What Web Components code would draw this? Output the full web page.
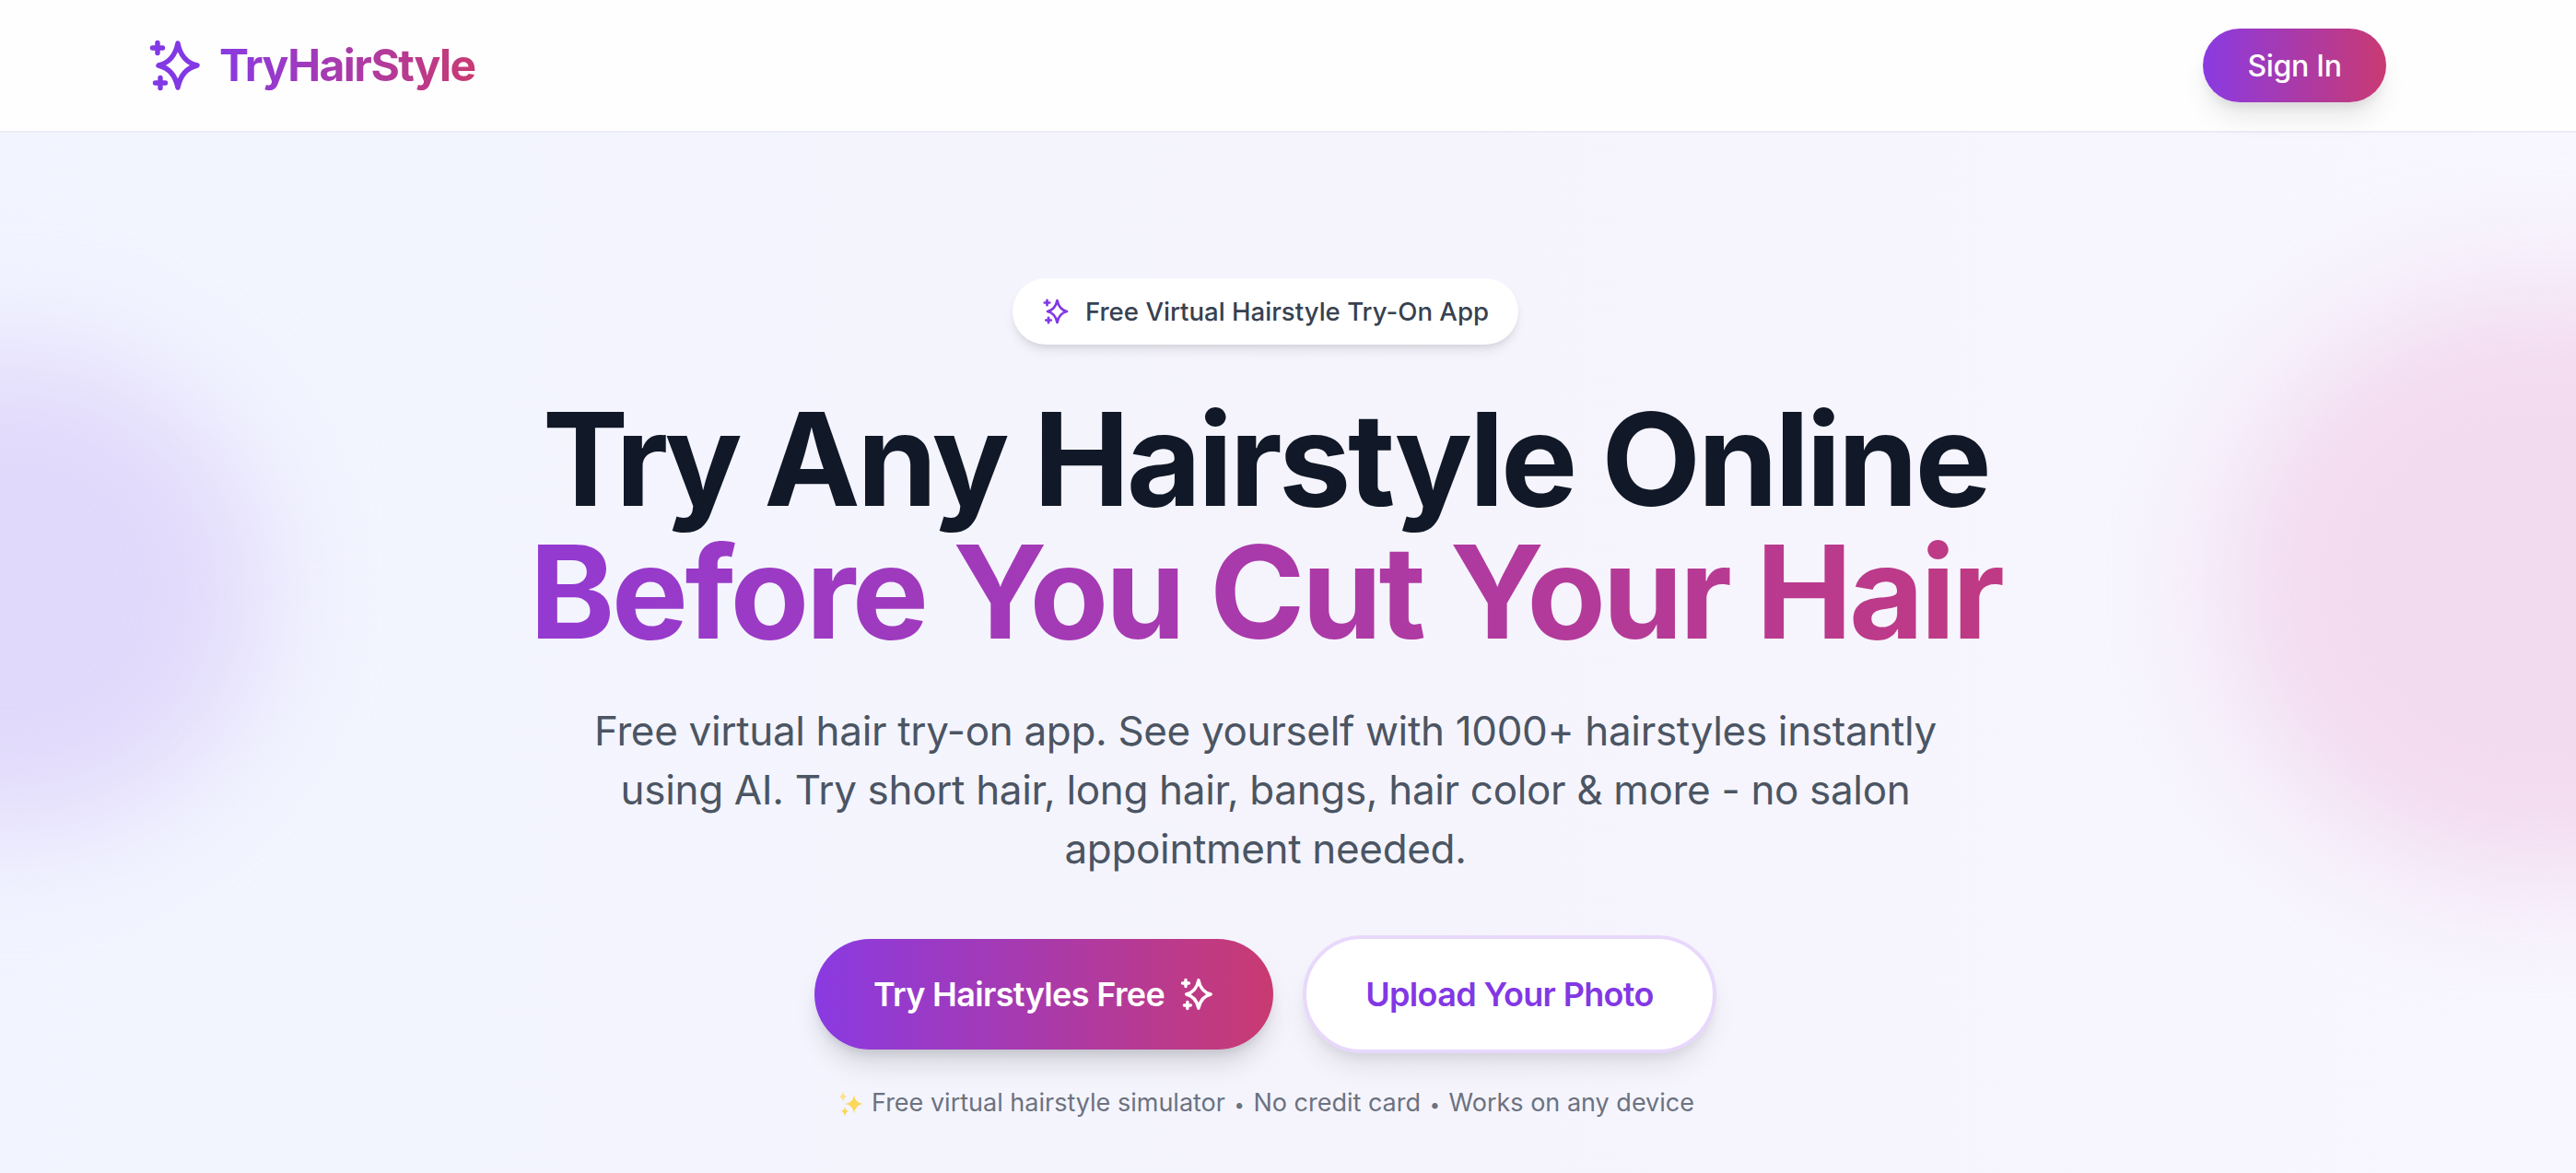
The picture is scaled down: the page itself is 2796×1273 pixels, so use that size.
<!DOCTYPE html>
<html lang="en">
<head>
<meta charset="utf-8">
<title>TryHairStyle</title>
<style>
  html, body { margin: 0; height: 100%; }
  body { font-family: 'Inter', 'Liberation Sans', sans-serif; overflow: hidden; background: #f5f4fd; }
</style>
</head>
<body>
<app-page></app-page>

<script>
const GRADIENT = 'linear-gradient(to right, #8a3ae2, #c93a72)';

class SparkIcon extends HTMLElement {
  connectedCallback() {
    this.attachShadow({ mode: 'open' });
    this.shadowRoot.innerHTML = `
      <style>
        :host { display: inline-flex; width: var(--size, 60px); height: var(--size, 60px); flex: none; }
        svg { width: 100%; height: 100%; display: block; fill: none; stroke: currentColor; stroke-width: 5.4; stroke-linecap: round; stroke-linejoin: round; }
      </style>
      <svg viewBox="0 0 60 60" aria-hidden="true">
        <path d="M33 6Q37 26 54 30Q37 34 33 54Q29 34 12 30Q29 26 33 6Z"/>
        <path d="M11 5.5v11M5.5 11h11"/>
        <path d="M14 43.5v11M8.5 49h11"/>
      </svg>
    `;
  }
}
customElements.define('spark-icon', SparkIcon);

class SiteHeader extends HTMLElement {
  connectedCallback() {
    this.attachShadow({ mode: 'open' });
    this.shadowRoot.innerHTML = `
      <style>
        :host {
          display: block;
          position: relative;
          z-index: 2;
          height: 142px;
          background: rgba(255, 255, 255, 0.85);
          border-bottom: 2px solid #ecebf6;
        }
        .bar {
          height: 100%;
          display: flex;
          align-items: center;
          justify-content: space-between;
          padding: 0 206px 0 160px;
        }
        .logo { display: flex; align-items: center; gap: 18px; color: #8238e4; text-decoration: none; }
        .name {
          font-size: 48px;
          font-weight: 700;
          line-height: 60px;
          letter-spacing: -1.5px;
          background: ${GRADIENT};
          -webkit-background-clip: text;
          background-clip: text;
          color: transparent;
        }
        .signin {
          display: flex;
          align-items: center;
          justify-content: center;
          width: 199px;
          height: 80px;
          border-radius: 40px;
          background: ${GRADIENT};
          color: #fff;
          font-size: 32px;
          font-weight: 500;
          letter-spacing: -0.3px;
          text-decoration: none;
          box-shadow: 0 20px 30px -6px rgba(0, 0, 0, 0.1), 0 8px 12px -4px rgba(0, 0, 0, 0.08);
        }
      </style>
      <div class="bar">
        <a class="logo" href="#"><spark-icon></spark-icon><span class="name"><slot name="brand"></slot></span></a>
        <a class="signin" href="#"><slot name="action"></slot></a>
      </div>
    `;
  }
}
customElements.define('site-header', SiteHeader);

class HeroBadge extends HTMLElement {
  connectedCallback() {
    this.attachShadow({ mode: 'open' });
    this.shadowRoot.innerHTML = `
      <style>
        :host {
          display: inline-flex;
          align-items: center;
          gap: 17px;
          height: 72px;
          padding: 0 32px;
          border-radius: 36px;
          background: #fff;
          color: #374151;
          font-size: 27.6px;
          font-weight: 500;
          box-shadow: 0 8px 14px -3px rgba(0, 0, 0, 0.1), 0 4px 8px -4px rgba(0, 0, 0, 0.1);
          --size: 30px;
        }
        spark-icon { color: #8238e4; }
      </style>
      <spark-icon></spark-icon><slot></slot>
    `;
  }
}
customElements.define('hero-badge', HeroBadge);

class CtaButton extends HTMLElement {
  connectedCallback() {
    this.attachShadow({ mode: 'open' });
    this.shadowRoot.innerHTML = `
      <style>
        :host {
          display: inline-flex;
          align-items: center;
          justify-content: center;
          gap: 16px;
          box-sizing: border-box;
          border-radius: 64px;
          font-size: 36px;
          letter-spacing: -0.65px;
          font-weight: 600;
          white-space: nowrap;
        }
        :host([kind="primary"]) {
          width: 498px;
          height: 120px;
          background: ${GRADIENT};
          color: #fff;
          --size: 38px;
          box-shadow: 0 20px 30px -6px rgba(0, 0, 0, 0.14), 0 8px 12px -4px rgba(0, 0, 0, 0.1);
        }
        :host([kind="outline"]) {
          width: 449px;
          height: 128px;
          background: #fff;
          color: #8238e4;
          border: 4px solid #e8d8fb;
          box-shadow: 0 20px 30px -6px rgba(0, 0, 0, 0.09), 0 8px 12px -4px rgba(0, 0, 0, 0.07);
        }
      </style>
      <slot></slot><slot name="icon"></slot>
    `;
  }
}
customElements.define('cta-button', CtaButton);

class HeroSection extends HTMLElement {
  connectedCallback() {
    this.attachShadow({ mode: 'open' });
    this.shadowRoot.innerHTML = `
      <style>
        :host {
          display: block;
          position: relative;
          overflow: hidden;
          height: 1129px;
          background: linear-gradient(to right, #f2f5ff, #f5f4fd 50%, #f8f6ff);
        }
        .blob { position: absolute; border-radius: 50%; filter: blur(64px); }
        .blob.left { left: -270px; top: 232px; width: 560px; height: 530px; background: #e1d9fb; }
        .blob.right { right: -299px; top: 170px; width: 680px; height: 640px; background: #f2daef; }
        .content {
          position: relative;
          box-sizing: border-box;
          width: 2747px;
          height: 100%;
          padding-top: 158px;
          display: flex;
          flex-direction: column;
          align-items: center;
        }
        h1 {
          margin: 52px 0 0;
          width: 2300px;
          font-size: 140px;
          line-height: 144px;
          font-weight: 700;
          letter-spacing: -3.6px;
          color: #111827;
          text-align: center;
        }
        h1 .tight { letter-spacing: -6px; }
        h1 .accent {
          display: block;
          background: ${GRADIENT};
          -webkit-background-clip: text;
          background-clip: text;
          color: transparent;
        }
        p {
          margin: 47px 0 0;
          width: 1500px;
          font-size: 44px;
          line-height: 64px;
          letter-spacing: -0.34px;
          color: #4b5563;
          text-align: center;
        }
        .actions { margin-top: 62px; display: flex; align-items: center; gap: 32px; }
        .note {
          margin-top: 34px;
          display: flex;
          align-items: center;
          gap: 6px;
          font-size: 27px;
          line-height: 40px;
          color: #6b7280;
        }
        .note svg { width: 32px; height: 32px; flex: none; }
        .dot { font-size: 20px; margin: 0 2px; }
      </style>
      <div class="blob left"></div>
      <div class="blob right"></div>
      <div class="content">
        <hero-badge>Free Virtual Hairstyle Try-On App</hero-badge>
        <h1><span class="tight">Try</span> Any Hairstyle Online<span class="accent">Before You Cut Your Hair</span></h1>
        <p>Free virtual hair try-on app. See yourself with 1000+ hairstyles instantly using AI. Try short hair, long hair, bangs, hair color &amp; more - no salon appointment needed.</p>
        <div class="actions">
          <cta-button kind="primary">Try Hairstyles Free<spark-icon slot="icon"></spark-icon></cta-button>
          <cta-button kind="outline">Upload Your Photo</cta-button>
        </div>
        <div class="note">
          <svg viewBox="0 0 32 32" aria-hidden="true">
            <path fill="#fbd75b" d="M19 6Q20 15 29 16Q20 17 19 27Q18 17 9 16Q18 15 19 6Z"/>
            <path fill="#fce08a" d="M7 2Q7.5 7 11 8Q7.5 9 7 14Q6.5 9 3 8Q6.5 7 7 2Z"/>
            <path fill="#fbd75b" d="M9 19Q9.5 23 13 24Q9.5 25 9 30Q8.5 25 5 24Q8.5 23 9 19Z"/>
          </svg>
          <span>Free virtual hairstyle simulator <span class="dot">•</span> No credit card <span class="dot">•</span> Works on any device</span>
        </div>
      </div>
    `;
  }
}
customElements.define('hero-section', HeroSection);

class AppPage extends HTMLElement {
  connectedCallback() {
    this.attachShadow({ mode: 'open' });
    this.shadowRoot.innerHTML = `
      <style>
        :host { display: block; height: 1273px; }
      </style>
      <site-header>
        <span slot="brand">TryHairStyle</span>
        <span slot="action">Sign In</span>
      </site-header>
      <hero-section></hero-section>
    `;
  }
}
customElements.define('app-page', AppPage);
</script>
</body>
</html>
